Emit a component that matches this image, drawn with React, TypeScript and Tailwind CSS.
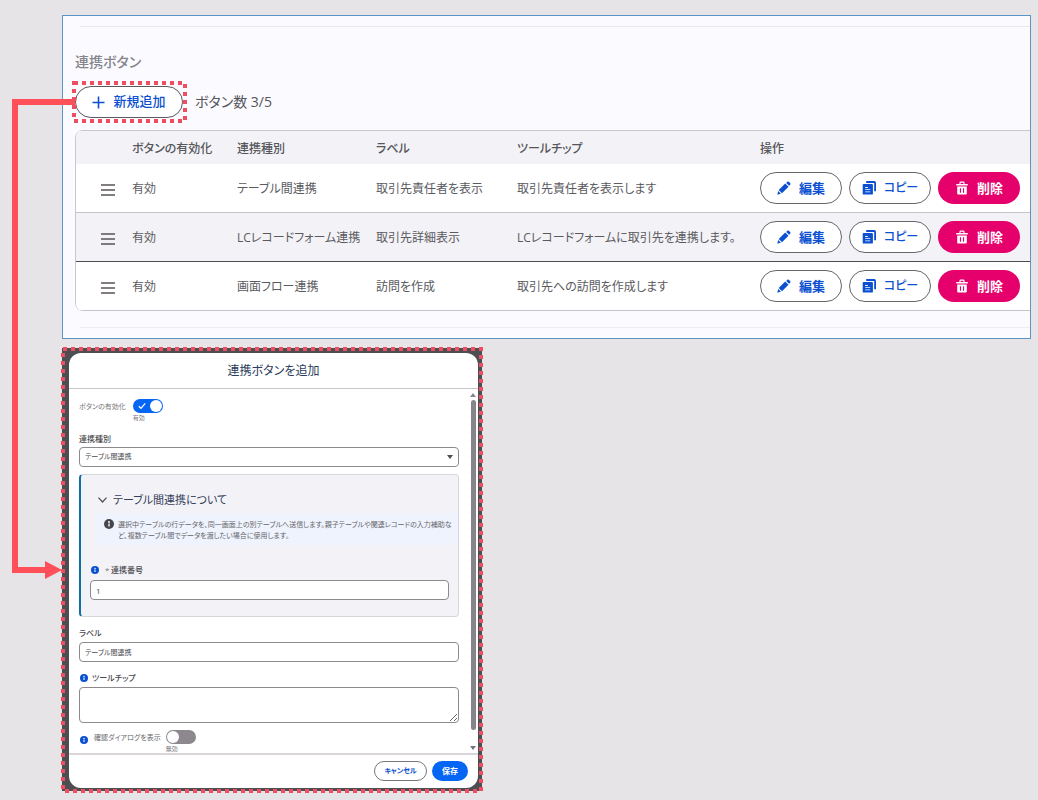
import React, { useState } from 'react';

interface LinkButton {
  id: number;
  status: string;
  type: string;
  label: string;
  tooltip: string;
}

const linkButtons: LinkButton[] = [
  { id: 1, status: '有効', type: 'テーブル間連携', label: '取引先責任者を表示', tooltip: '取引先責任者を表示します' },
  { id: 2, status: '有効', type: 'LCレコードフォーム連携', label: '取引先詳細表示', tooltip: 'LCレコードフォームに取引先を連携します。' },
  { id: 3, status: '有効', type: '画面フロー連携', label: '訪問を作成', tooltip: '取引先への訪問を作成します' },
];

const PencilIcon = () => (
  <svg viewBox="0 0 14 14" className="h-3.5 w-3.5 shrink-0" fill="currentColor" aria-hidden="true">
    <path d="M1.7 9 8.200 2.500l3.300 3.300-6.500 6.500z" />
    <path d="M1.3 10.1.4 13.1c-.1.4.2.6.5.5l3-.9z" />
    <path d="m9.2 1.9 1.2-1.2c.4-.4 1-.4 1.4 0l1.5 1.5c.4.4.4 1 0 1.4l-1.2 1.2z" />
  </svg>
);

const CopyIcon = () => (
  <svg viewBox="0 0 14 14" className="h-3.5 w-3.5 shrink-0" aria-hidden="true">
    <path d="M4.2 1h8c.5 0 .9.4.9.9v8.4" fill="none" stroke="currentColor" strokeWidth="1.8" />
    <path fill="currentColor" fillRule="evenodd" d="M1.6 3h8.4c.5 0 .9.4.9.9v8.8c0 .5-.4.9-.9.9H1.6c-.5 0-.9-.4-.9-.9V3.9c0-.5.4-.9.9-.9ZM3.2 6v.9h2.6V6Zm0 2.2v.8h5v-.8Zm0 2.2v.8h5v-.8Z" />
  </svg>
);

const TrashIcon = () => (
  <svg viewBox="0 0 14 14" className="h-3.5 w-3.5 shrink-0" aria-hidden="true">
    <path d="M5 3V1.9c0-.5.3-.8.8-.8h2.4c.5 0 .8.3.8.8V3" fill="none" stroke="currentColor" strokeWidth="1.2" />
    <path fill="currentColor" d="M1.6 2.9h10.8c.3 0 .5.2.5.5v.7c0 .3-.2.5-.5.5H1.6c-.3 0-.5-.2-.5-.5v-.7c0-.3.2-.5.5-.5Z" />
    <path fill="currentColor" fillRule="evenodd" d="M2.2 5.6h9.6v6.8c0 .7-.5 1.2-1.2 1.2H3.4c-.7 0-1.2-.5-1.2-1.2Zm2.7 1.6v4.5h1.1V7.2Zm3.1 0v4.5h1.1V7.2Z" />
  </svg>
);

const InfoIcon = ({ className }: { className: string }) => (
  <svg viewBox="0 0 10 10" className={`shrink-0 ${className}`} aria-hidden="true">
    <circle cx="5" cy="5" r="5" fill="currentColor" />
    <circle cx="5" cy="3" r=".9" fill="#fff" />
    <path d="M5 4.5v3" fill="none" stroke="#fff" strokeWidth="1.3" />
  </svg>
);

const DottedFrame = ({ className }: { className: string }) => (
  <svg className={`pointer-events-none absolute overflow-visible text-[#ee4e60] ${className}`} aria-hidden="true">
    <rect width="100%" height="100%" fill="none" stroke="currentColor" strokeWidth="4" strokeDasharray="4 4" />
  </svg>
);

interface SwitchProps {
  id: string;
  checked: boolean;
  onChange: (checked: boolean) => void;
}

const Switch = ({ id, checked, onChange }: SwitchProps) => (
  <div className="relative w-[30px]">
    <input
      id={id}
      type="checkbox"
      checked={checked}
      onChange={(e) => onChange(e.target.checked)}
      className="block h-3.5 w-[30px] appearance-none rounded-full bg-[#8d888d] checked:bg-[#0566f5]"
    />
    <span className={`pointer-events-none absolute top-px h-3 w-3 rounded-full bg-white ${checked ? 'right-px' : 'left-px'}`} />
    {checked && (
      <svg viewBox="0 0 8 8" className="pointer-events-none absolute left-[5px] top-[3px] h-2 w-2" aria-hidden="true">
        <path d="m.8 4.2 2.2 2.2 4.2-5" fill="none" stroke="#fff" strokeWidth="1.3" />
      </svg>
    )}
    <span className="block text-[6px] leading-[10px] text-[#77777b]">{checked ? '有効' : '無効'}</span>
  </div>
);

const LinkButtonTable = () => (
  <table className="w-full table-fixed border-separate border-spacing-0 text-left text-[12px] leading-5 text-[#5a5a5f]">
    <thead>
      <tr className="h-[34px] bg-[#f3f2f6] text-[#55555a] [&>th]:border-t [&>th]:border-[#c9c7ca] [&>th]:pt-0.5 [&>th]:font-medium">
        <th className="w-[56px]" />
        <th className="w-[105px]">ボタンの有効化</th>
        <th className="w-[139px]">連携種別</th>
        <th className="w-[141px]">ラベル</th>
        <th className="w-[243px]">ツールチップ</th>
        <th>操作</th>
      </tr>
    </thead>
    <tbody className="[&>tr:nth-child(2)]:bg-[#f3f2f6] [&>tr:nth-child(2)>td]:border-[#4d4d51] [&>tr>td]:border-b [&>tr>td]:border-[#c5c4c8]">
      {linkButtons.map((item) => (
        <tr key={item.id} className="h-[49px] bg-white">
          <td>
            <svg viewBox="0 0 14 12" className="ml-[25px] mt-1 h-3 w-3.5" aria-hidden="true">
              <path d="M0 1h14M0 6h14M0 11h14" stroke="#5a5358" strokeWidth="1.6" />
            </svg>
          </td>
          <td className="pt-0.5">{item.status}</td>
          <td className="whitespace-nowrap pt-0.5">{item.type}</td>
          <td className="whitespace-nowrap pt-0.5">{item.label}</td>
          <td className="whitespace-nowrap pt-0.5">{item.tooltip}</td>
          <td>
            <div className="flex gap-[7px]">
              <button className="flex h-8 w-[82px] shrink-0 items-center justify-center gap-2 rounded-full border border-[#66666b] bg-white text-[13px] font-bold text-[#0b50d0]">
                <PencilIcon />
                編集
              </button>
              <button className="flex h-8 w-[82px] shrink-0 items-center justify-center gap-2 rounded-full border border-[#66666b] bg-white font-medium text-[#0b50d0]">
                <CopyIcon />
                コピー
              </button>
              <button className="flex h-8 w-[82px] shrink-0 items-center justify-center gap-2 rounded-full bg-[#e6006b] text-[13px] font-bold text-white">
                <TrashIcon />
                削除
              </button>
            </div>
          </td>
        </tr>
      ))}
    </tbody>
  </table>
);

const AddButtonDialog = () => {
  const [enabled, setEnabled] = useState(true);
  const [confirm, setConfirm] = useState(false);
  const [form, setForm] = useState({ number: '1', label: 'テーブル間連携', tooltip: '' });

  const handleChange = (field: keyof typeof form, value: string) => {
    setForm((current) => ({ ...current, [field]: value }));
  };

  return (
    <div className="relative w-[420px] bg-[#4d4e52] px-[7px] pb-[3px] pt-[5px]">
      <div role="dialog" aria-labelledby="dialog-title" className="mr-[-3px] overflow-hidden rounded-xl bg-white text-[8px] text-[#47474c]">
        <h2 id="dialog-title" className="border-b border-[#c9c6ca] text-center text-[12px] leading-[35px] text-[#2c3c5c]">連携ボタンを追加</h2>

        <div className="flex h-[364px] overflow-hidden">
          <div className="flex-1 pl-2.5 pr-[11px] pt-2.5">
            <div className="flex h-[34px] gap-[7px]">
              <label htmlFor="enabled" className="text-[7px] leading-4 text-[#77777b]">ボタンの有効化</label>
              <Switch id="enabled" checked={enabled} onChange={setEnabled} />
            </div>

            <label htmlFor="type" className="block pb-0.5 font-medium leading-3">連携種別</label>
            <div className="relative">
              <select id="type" className="block h-5 w-full appearance-none rounded border border-[#8d8a8e] bg-white px-[5px] text-[7px]">
                <option>テーブル間連携</option>
                <option>LCレコードフォーム連携</option>
                <option>画面フロー連携</option>
              </select>
              <svg viewBox="0 0 6 4" className="pointer-events-none absolute right-1.5 top-2 h-1 w-1.5" aria-hidden="true">
                <path d="M0 0h6L3 4z" fill="#4d4d51" />
              </svg>
            </div>

            <section className="mt-[7px] rounded border border-l-2 border-[#d8d6db] border-l-[#0f6fa6] bg-[#f3f2f6] pb-4 pt-4">
              <h3>
                <button className="ml-[17px] flex items-center gap-1.5 text-[11px] leading-[18px] text-[#33405a]">
                  <svg viewBox="0 0 9 6" className="h-1.5 w-[9px]" aria-hidden="true">
                    <path d="M.5.7 4.5 5 8.5.7" fill="none" stroke="#4d4d51" strokeWidth="1.2" />
                  </svg>
                  テーブル間連携について
                </button>
              </h3>
              <div className="ml-4 mt-1 flex gap-1 bg-[#eff3fd] pb-1 pl-[7px] pr-1 pt-1.5">
                <InfoIcon className="h-2.5 w-2.5 text-[#46464c]" />
                <p className="text-[7px] leading-[11px] text-[#66666b]">
                  選択中テーブルの行データを、同一画面上の別テーブルへ送信します。親子テーブルや関連レコードの入力補助など、複数テーブル間でデータを渡したい場合に使用します。
                </p>
              </div>
              <div className="mt-[19px] px-[9px]">
                <div className="flex items-center pb-1 pl-px font-medium leading-3">
                  <InfoIcon className="h-2 w-2 text-[#0b50d0]" />
                  <span className="w-3 pl-1.5 text-[#77777b]">*</span>
                  <label htmlFor="number">連携番号</label>
                </div>
                <input id="number" className="block h-5 w-full rounded border border-[#8d8a8e] bg-white px-[5px]" value={form.number} onChange={(e) => handleChange('number', e.target.value)} />
              </div>
            </section>

            <label htmlFor="label" className="mt-2.5 block pb-[3px] font-medium leading-3">ラベル</label>
            <input id="label" className="block h-5 w-full rounded border border-[#8d8a8e] px-[5px] text-[7px]" value={form.label} onChange={(e) => handleChange('label', e.target.value)} />

            <div className="mt-2.5 flex items-center gap-1 pb-[3px] pl-px font-medium leading-3">
              <InfoIcon className="h-2 w-2 text-[#0b50d0]" />
              <label htmlFor="tooltip">ツールチップ</label>
            </div>
            <textarea id="tooltip" className="block h-9 w-full rounded border border-[#8d8a8e] px-[5px]" value={form.tooltip} onChange={(e) => handleChange('tooltip', e.target.value)} />

            <div className="mt-[7px] flex pl-px">
              <InfoIcon className="mt-1.5 h-2 w-2 text-[#0b50d0]" />
              <label htmlFor="confirm" className="ml-1.5 mr-[5px] text-[7px] leading-4 text-[#66666b]">確認ダイアログを表示</label>
              <Switch id="confirm" checked={confirm} onChange={setConfirm} />
            </div>
          </div>

          <div className="mr-0.5 flex w-1.5 flex-col items-center pb-[3px] pt-1">
            <svg viewBox="0 0 6 4" className="h-1 w-1.5 shrink-0" aria-hidden="true">
              <path d="M0 4h6L3 0z" fill="#88858a" />
            </svg>
            <div className="mb-4 mt-[3px] w-[5px] flex-1 rounded-full bg-[#88858a]" />
            <svg viewBox="0 0 6 4" className="h-1 w-1.5 shrink-0" aria-hidden="true">
              <path d="M0 0h6L3 4z" fill="#77747a" />
            </svg>
          </div>
        </div>

        <div className="flex justify-end gap-[5px] border-t-2 border-[#d9d5d8] pb-[7px] pr-2.5 pt-1.5">
          <button className="h-5 w-[53px] rounded-full border border-[#77777b] text-[7px] font-bold text-[#0b50d0]">キャンセル</button>
          <button className="h-5 w-9 rounded-full bg-[#0566f5] font-bold text-white">保存</button>
        </div>
      </div>
      <DottedFrame className="left-px top-px h-[calc(100%-1px)] w-[calc(100%-2px)]" />
    </div>
  );
};

const App: React.FC = () => {
  return (
    <main className="relative min-h-screen bg-[#e7e4e8] pb-1.5 pl-[62px] pr-[7px] pt-[15px] font-['Open_Sans','Noto_Sans_CJK_JP',sans-serif] [font-feature-settings:'palt']">
      <section className="overflow-hidden border border-[#5c95c3] bg-[#fbfaff] pb-2.5 pl-3 pt-2.5">
        <div className="ml-[5px] border-t border-[#e9e7ec]" />
        <h1 className="pt-[23px] text-[14px] font-medium leading-6 text-[#85858b]">連携ボタン</h1>
        <div className="mt-3 flex items-center gap-3">
          <div className="relative">
            <button className="flex h-8 w-[108px] items-center justify-center gap-2 rounded-full border border-[#5a5a5f] bg-white text-[13px] font-medium text-[#0b50d0]">
              <svg viewBox="0 0 13 13" className="h-[13px] w-[13px]" aria-hidden="true">
                <path d="M6.5.5v12M.5 6.5h12" stroke="currentColor" strokeWidth="1.6" />
              </svg>
              新規追加
            </button>
            <DottedFrame className="-left-px top-[-3px] h-[38px] w-[111px]" />
          </div>
          <span className="text-[14px] leading-5 text-[#55555a]">ボタン数 3/5</span>
        </div>
        <div className="mt-3 overflow-hidden rounded-l-lg border-l border-[#c9c7ca]">
          <LinkButtonTable />
        </div>
        <div className="ml-[5px] mt-4 border-t border-[#efedf2]" />
      </section>

      <div className="mt-[9px]">
        <AddButtonDialog />
      </div>

      {/* connector from the add button to the dialog */}
      <svg viewBox="0 0 76 580" className="pointer-events-none absolute left-0 top-0 h-[580px] w-[76px] text-[#ff4f58]" aria-hidden="true">
        <path d="M75 102H15v468h31" fill="none" stroke="currentColor" strokeWidth="6" />
        <path d="M45 561v18l17-9z" fill="currentColor" />
      </svg>
    </main>
  );
};

export default App;
